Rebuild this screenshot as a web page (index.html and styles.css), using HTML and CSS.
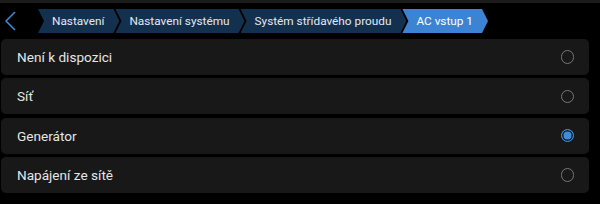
FILE: index.html
```html
<!DOCTYPE html>
<html lang="cs">
<head>
  <meta charset="UTF-8" />
  <meta name="viewport" content="width=device-width, initial-scale=1.0" />
  <title>AC vstup 1</title>
  <link rel="stylesheet" href="styles.css">
</head>
<body>
  <div class="topbar"></div>

  <div class="crumbs">
    <div class="back">
      <svg width="12" height="20" viewBox="0 0 12 20">
        <path d="M10.5 1.5 L2 10 L10.5 18.5" fill="none" stroke="#3a8ee0" stroke-width="1.5" stroke-linecap="round" stroke-linejoin="round"/>
      </svg>
    </div>
    <div class="crumb">Nastavení</div>
    <div class="crumb">Nastavení systému</div>
    <div class="crumb">Systém střídavého proudu</div>
    <div class="crumb active">AC vstup 1</div>
  </div>

  <div class="list">
    <div class="row">
      <span class="label">Není k dispozici</span>
      <span class="radio"></span>
    </div>
    <div class="row">
      <span class="label">Síť</span>
      <span class="radio"></span>
    </div>
    <div class="row">
      <span class="label">Generátor</span>
      <span class="radio checked"></span>
    </div>
    <div class="row">
      <span class="label">Napájení ze sítě</span>
      <span class="radio"></span>
    </div>
  </div>
</body>
</html>
```

FILE: styles.css
```css
body {
  margin: 0;
  background-color: #000;
  font-family: Roboto, "Noto Sans", sans-serif;
  color: #e8e8e8;
  width: 600px;
  height: 204px;
  overflow: hidden;
}
.topbar {
  height: 3px;
  background-color: #1b1b1b;
}
.crumbs {
  display: flex;
  align-items: center;
  height: 24px;
  margin-top: 6px;
}
.back {
  width: 38px;
  height: 24px;
  display: flex;
  align-items: center;
  padding-left: 4px;
  box-sizing: border-box;
}
.crumb {
  height: 24px;
  line-height: 24px;
  padding: 0 15px 0 14px;
  font-size: 11.8px;
  color: #e3e8ef;
  background-color: #13304f;
  clip-path: polygon(0 0, calc(100% - 6px) 0, 100% 50%, calc(100% - 6px) 100%, 0 100%, 6px 50%);
  white-space: nowrap;
}
.crumb + .crumb {
  margin-left: -4px;
}
.crumb.active {
  background-color: #3c84d3;
  color: #fff;
}
.list {
  display: flex;
  flex-direction: column;
  gap: 3.3px;
  padding: 6px 11px 0 1px;
}
.row {
  height: 36px;
  display: flex;
  align-items: center;
  justify-content: space-between;
  padding: 0 15px 0 16px;
  background-color: #181818;
  border-radius: 5px;
}
.label {
  font-size: 13.6px;
  color: #e6e6e6;
}
.radio {
  width: 11.5px;
  height: 11.5px;
  border: 1.5px solid #777;
  border-radius: 50%;
}
.radio.checked {
  border-color: #3a8ee0;
  background-color: #3a8ee0;
  box-shadow: inset 0 0 0 1.5px #181818;
}
```
